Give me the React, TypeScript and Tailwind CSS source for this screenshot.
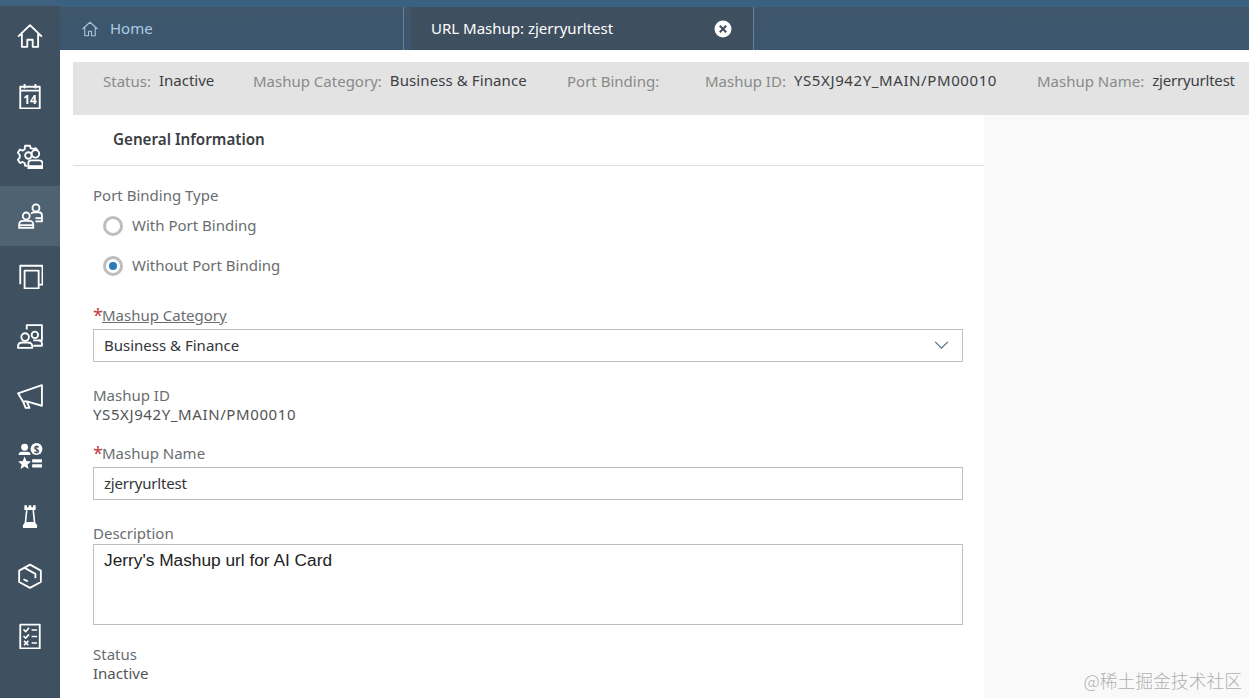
import type { ReactNode } from "react";

const FONT = "font-['Noto_Sans','Open_Sans',sans-serif]";

function Icon({ children }: { children: ReactNode }) {
  return (
    <svg viewBox="0 0 24 24" fill="none" stroke="white" strokeWidth="1.700" strokeLinejoin="round" className="w-[26px] h-[26px]">
      {children}
    </svg>
  );
}

const ICONS: ReactNode[] = [
  <Icon key="home">
    <path d="M1 12.500 12 2l11 10.500M4.500 10v12h5v-6.500h5V22h5V10" />
  </Icon>,
  <Icon key="cal">
    <path d="M3 3.500h18v20H3zM7 1v4M17 1v4M3 7h18" />
    <text x="12" y="19.500" fill="white" stroke="none" fontSize="11" fontWeight="700" textAnchor="middle">14</text>
  </Icon>,
  <Icon key="gear">
    <path d="M9.500 21H7.500L7 18.500l-2-1-2.300 1L.8 15.500l1.700-2v-2.500L.8 9l1.900-3 2.300 1 2-1L7.500 2.500h4.500l.6 2.300 2.400.7 2.200-.8 1.800 2" />
    <circle cx="10.500" cy="11.500" r="3" />
    <circle cx="17" cy="10" r="3.500" />
    <path d="M10.500 23.500v-5q0-2.500 2.500-2.500h7.500q3 0 3 2.500v5z" />
    <path d="M11 20.500h12v3H11z" fill="white" stroke="none" />
  </Icon>,
  <Icon key="users">
    <circle cx="8.500" cy="12" r="3.200" />
    <path d="M2 23v-3q0-3.500 3.500-3.500h6q3.500 0 3.500 3.500v3z" />
    <path d="M2 20.500h13" />
    <circle cx="17.500" cy="4.500" r="3.200" />
    <path d="M13 10q1-1.500 3-1.500h4q3 0 3 2.500v6h-6" />
    <path d="M17 14h6" />
  </Icon>,
  <Icon key="copy">
    <path d="M7 7h13v16.500H7zM3 19.500V2.500h20.500V20h-3.500" />
  </Icon>,
  <Icon key="group">
    <path d="M9 6V2h14v14h-3" />
    <circle cx="7.500" cy="13" r="3.500" />
    <circle cx="16.500" cy="11" r="3" />
    <path d="M1 23v-1.500q0-3.500 4-3.500h5q4 0 4 3.500V23zM15 16h4q4 0 4 3v2h-8" />
  </Icon>,
  <Icon key="horn">
    <path d="M1 9.500 23 2v19L9 17H5.500zM5.500 17l2.500 6h3.500l-2.500-6M1 9.500 5.500 17" />
  </Icon>,
  <svg key="list" viewBox="0 0 24 24" fill="white" className="w-[26px] h-[26px]">
    <circle cx="7" cy="4" r="3.200" />
    <path d="M1.500 11q0-3 3-3h5q3 0 3 3z" />
    <circle cx="18" cy="5.500" r="5.500" />
    <text x="18" y="9" fill="#3f5161" fontSize="9" fontWeight="700" textAnchor="middle">$</text>
    <path d="m7 12.500 1.700 4.200 4.300.3-3.300 2.800 1 4.200L7 21.700 3.300 24l1-4.200L1 17l4.300-.3zM14 15h9v3h-9zM14 19.500h9v3h-9z" />
  </svg>,
  <svg key="rook" viewBox="0 0 24 24" fill="none" stroke="white" strokeWidth="1.500" className="w-[26px] h-[26px]">
    <path d="M6.800 2v4.500h10.400V2h-2.400v2h-1.600V2h-2.400v2H9.200V2z" fill="white" stroke="none" />
    <path d="M9 6.500 7.800 18M15 6.500 16.200 18" />
    <path d="M7.500 17.500h9l2 3v2.500h-13v-2.500z" fill="white" stroke="none" />
  </svg>,
  <Icon key="box">
    <path d="M12 1.500 22 7v10.500l-10 5.500-10-5.500V7zM7 4.500 17 10v4M6 15l4 2" />
  </Icon>,
  <Icon key="check">
    <path d="M3 1.500h18v22H3z" />
    <path d="m6 6 2 2 3-3.500M13.500 6.500h5M6 12l2 2 3-3.500M13.500 12.500h5M6.500 16.500l4 4M10.500 16.500l-4 4M13.500 18.500h5" strokeWidth="1.500" />
  </Icon>,
];

function SummaryItem({ label, value, className, valueClass }: { label: string; value: string; className: string; valueClass?: string }) {
  return (
    <div className={`flex items-center shrink-0 ${className}`}>
      <span className="text-[#8a8a8a]">{label}</span>
      {value && <span className={`text-[#3c4043] -mt-[2px] ${valueClass ?? ""}`}>{value}</span>}
    </div>
  );
}

function FieldLabel({ children }: { children: ReactNode }) {
  return <div className="text-[15px] leading-[20px] text-[#6a6d70]">{children}</div>;
}

function Required({ children, underline }: { children: string; underline?: boolean }) {
  return (
    <div className="flex text-[15px] leading-[20px] text-[#6a6d70]">
      <span className="text-[#c23b3b] text-[18px]">*</span>
      <span className={`-ml-[1px] ${underline ? "underline" : ""}`}>{children}</span>
    </div>
  );
}

function Radio({ label, checked }: { label: string; checked?: boolean }) {
  return (
    <div className="flex items-center h-[40px] pl-[10px] gap-[9px]">
      <span className="w-[20px] h-[20px] rounded-full border-[3px] border-[#bdbdbd] bg-white flex items-center justify-center">
        {checked && <span className="w-[8px] h-[8px] rounded-full bg-[#2b7cb8]" />}
      </span>
      <span className="text-[15px] leading-[20px] pb-[2px] text-[#6a6d70]">{label}</span>
    </div>
  );
}

export default function App() {
  return (
    <div className={`${FONT} w-[1249px] h-[698px] overflow-hidden flex bg-white`}>
      {/* Side nav */}
      <div className="w-[60px] shrink-0 bg-[#3f5060]">
        <div className="h-[6px] bg-[#3e6180]" />
        {ICONS.map((icon, i) => (
          <div key={i} className={`h-[60px] flex items-center justify-center ${i === 3 ? "bg-[#4f6272]" : ""}`}>
            {icon}
          </div>
        ))}
      </div>

      <div className="flex-1 flex flex-col min-w-0">
        {/* Tab strip */}
        <div className="h-[50px] shrink-0 bg-linear-to-b from-[#40566b] to-[#3b566f] flex flex-col">
          <div className="h-[7px] bg-[#3b6180]" />
          <div className="flex-1 flex">
            <div className="w-[344px] flex items-center pl-[21px] gap-[11px] border-r border-[#6b8093]">
              <svg viewBox="0 0 24 24" fill="none" stroke="#a9c4d8" strokeWidth="1.500" strokeLinejoin="round" className="w-[18px] h-[18px]">
                <path d="M2 12 12 3l10 9M5 10v11h5v-6h4v6h5V10" />
              </svg>
              <span className="text-[15px] leading-[20px] pb-[2px] text-[#a9cde6]">Home</span>
            </div>
            <div className="ml-[7px] w-[343px] bg-[#3e4f5f] border-r border-[#6b8093] flex items-center justify-between pl-[20px] pr-[21px] text-white text-[15px]">
              <span className="pb-[2px] leading-[20px]">URL Mashup: zjerryurltest</span>
              <svg viewBox="0 0 18 18" className="w-[18px] h-[18px]">
                <circle cx="9" cy="9" r="8.500" fill="white" />
                <path d="m5.800 5.800 6.400 6.400m0-6.400-6.400 6.400" stroke="#3e4f5f" strokeWidth="2" />
              </svg>
            </div>
          </div>
        </div>

        <div className="flex-1 flex flex-col pl-[13px] pt-[12px] min-h-0">
          {/* Summary bar */}
          <div className="h-[53px] shrink-0 bg-[#e3e3e3] flex items-start pt-[8px] text-[15px] leading-[22px] whitespace-nowrap overflow-hidden">
            <SummaryItem label="Status:" value="Inactive" className="ml-[30px] w-[150px] gap-[8px]" />
            <SummaryItem label="Mashup Category:" value="Business & Finance" className="w-[314px] gap-[8px]" valueClass="tracking-[0.1px]" />
            <SummaryItem label="Port Binding:" value="" className="w-[138px]" />
            <SummaryItem label="Mashup ID:" value="YS5XJ942Y_MAIN/PM00010" className="w-[332px] gap-[8px]" valueClass="tracking-[0.6px]" />
            <SummaryItem label="Mashup Name:" value="zjerryurltest" className="gap-[8px]" valueClass="tracking-[-0.2px]" />
          </div>

          <div className="flex-1 flex min-h-0">
            <div className="w-[911px] shrink-0 bg-white">
              <div className="h-[51px] border-b border-[#dedede] pl-[40px] pb-[2px] flex items-center text-[15.200px] font-semibold text-[#3a3e42]">
                General Information
              </div>
              <div className="pl-[20px] pr-[21px] pt-[19px]">
                <FieldLabel>Port Binding Type</FieldLabel>
                <div className="mt-[1px]">
                  <Radio label="With Port Binding" />
                  <Radio label="Without Port Binding" checked />
                </div>

                <div className="mt-[19px]">
                  <Required underline>Mashup Category</Required>
                </div>
                <div className="mt-[4px] h-[33px] border border-[#bfbfbf] flex items-center justify-between pl-[10px] pr-[13px] text-[15px] text-[#32363a]">
                  <span>Business & Finance</span>
                  <svg viewBox="0 0 16 10" fill="none" stroke="#4d6f8a" strokeWidth="1.300" className="w-[15px] h-[9px]">
                    <path d="m1 1 7 7 7-7" />
                  </svg>
                </div>

                <div className="mt-[23px]">
                  <FieldLabel>Mashup ID</FieldLabel>
                  <div className="text-[15px] leading-[19px] tracking-[0.6px] text-[#515456]">YS5XJ942Y_MAIN/PM00010</div>
                </div>

                <div className="mt-[19px]">
                  <Required>Mashup Name</Required>
                </div>
                <div className="mt-[4px] h-[33px] border border-[#bfbfbf] flex items-center pl-[10px] text-[15px] tracking-[-0.200px] text-[#32363a]">
                  zjerryurltest
                </div>

                <div className="mt-[23px]">
                  <FieldLabel>Description</FieldLabel>
                </div>
                <div className="mt-[1px] h-[81px] border border-[#bfbfbf] pl-[10px] pt-[3px] font-['Liberation_Sans',sans-serif] text-[17.300px] leading-[24px] text-[#222]">
                  Jerry's Mashup url for AI Card
                </div>

                <div className="mt-[19px]">
                  <FieldLabel>Status</FieldLabel>
                  <div className="text-[15px] leading-[19px] text-[#515456]">Inactive</div>
                </div>
              </div>
            </div>

            <div className="flex-1 bg-[#f9f9f9] flex flex-col justify-end items-end pr-[7px] pb-[6px]">
              <span className="font-['Noto_Sans_CJK_SC',sans-serif] text-[17.800px] leading-[24px] font-light text-[#b0b0b0]">@稀土掘金技术社区</span>
            </div>
          </div>
        </div>
      </div>
    </div>
  );
}
